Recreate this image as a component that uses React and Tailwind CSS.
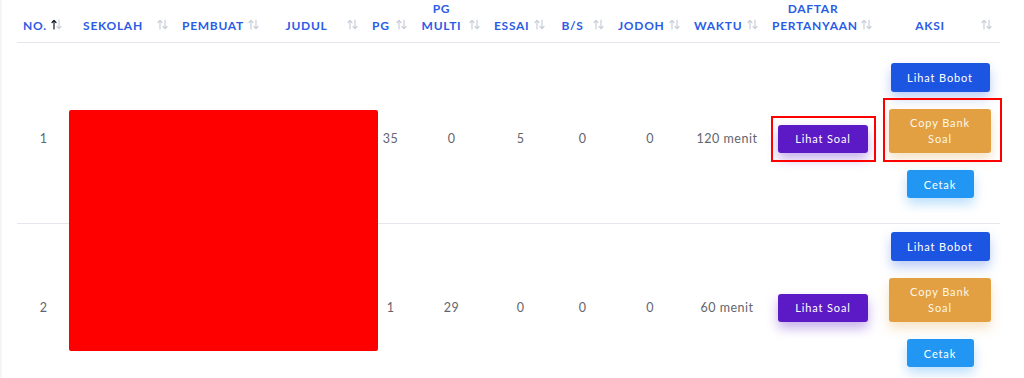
const columns = [
  { key: "no", label: ["NO."], width: 53, active: true },
  { key: "sekolah", label: ["SEKOLAH"], width: 106 },
  { key: "pembuat", label: ["PEMBUAT"], width: 91 },
  { key: "judul", label: ["JUDUL"], width: 99 },
  { key: "pg", label: ["PG"], width: 49 },
  { key: "pgmulti", label: ["PG", "MULTI"], width: 73 },
  { key: "essai", label: ["ESSAI"], width: 65 },
  { key: "bs", label: ["B/S"], width: 59 },
  { key: "jodoh", label: ["JODOH"], width: 76 },
  { key: "waktu", label: ["WAKTU"], width: 78 },
  { key: "daftar", label: ["DAFTAR", "PERTANYAAN"], width: 114 },
  { key: "aksi", label: ["AKSI"], width: 120 },
];

const rows = [
  { no: 1, pg: 35, pgmulti: 0, essai: 5, bs: 0, jodoh: 0, waktu: "120 menit", marked: true },
  { no: 2, pg: 1, pgmulti: 29, essai: 0, bs: 0, jodoh: 0, waktu: "60 menit", marked: false },
];

function SortIcon({ active }) {
  return (
    <svg width="11" height="11" viewBox="0 0 11 11" className="absolute right-[8px] bottom-[12px]">
      <g strokeWidth="1.2" fill="none" strokeLinecap="round" strokeLinejoin="round">
        <g stroke={active ? "#111827" : "#c9ced8"}>
          <path d="M3 10V1.5" />
          <path d="M1 3.5L3 1.5L5 3.5" />
        </g>
        <g stroke="#c9ced8">
          <path d="M8 1v8.5" />
          <path d="M6 7.5L8 9.5L10 7.5" />
        </g>
      </g>
    </svg>
  );
}

function Btn({ className, children }) {
  return (
    <button
      className={`block mx-auto mb-[17px] rounded-[3px] text-[11px] font-normal tracking-[0.08em] text-white leading-[15px] ${className}`}
    >
      {children}
    </button>
  );
}

function Cell({ first, children }) {
  return (
    <td
      className={`text-center align-middle text-[12.5px] text-[#63656d] tracking-[0.04em] px-[6px] pb-[8px] ${
        first ? "pt-[20px]" : "pt-[8px]"
      }`}
    >
      {children}
    </td>
  );
}

export default function App() {
  return (
    <div
      className="w-[1024px] h-[378px] overflow-hidden bg-white border-l-2 border-[#f4f5f8]"
      style={{ fontFamily: '"Lato", "Open Sans", sans-serif' }}
    >
      <div className="relative pl-[15px]">
        <table className="table-fixed border-collapse w-[983px]">
          <colgroup>
            {columns.map((c) => (
              <col key={c.key} style={{ width: c.width }} />
            ))}
          </colgroup>
          <thead>
            <tr className="h-[42px] border-b border-[#e4e7ee]">
              {columns.map((c) => (
                <th
                  key={c.key}
                  className="relative align-bottom text-center pl-[6px] pr-[26px] pb-[8px] pt-0 text-[12px] font-bold tracking-[0.06em] leading-[17px] text-[#2b5ce6]"
                >
                  {c.label.map((l) => (
                    <div key={l}>{l}</div>
                  ))}
                  <SortIcon active={c.active} />
                </th>
              ))}
            </tr>
          </thead>
          <tbody>
            {rows.map((r, i) => (
              <tr key={r.no} className={i === 0 ? "border-b border-[#e4e7ee]" : ""}>
                <Cell first={i === 0}>{r.no}</Cell>
                <Cell first={i === 0}></Cell>
                <Cell first={i === 0}></Cell>
                <Cell first={i === 0}></Cell>
                <Cell first={i === 0}>{r.pg}</Cell>
                <Cell first={i === 0}>{r.pgmulti}</Cell>
                <Cell first={i === 0}>{r.essai}</Cell>
                <Cell first={i === 0}>{r.bs}</Cell>
                <Cell first={i === 0}>{r.jodoh}</Cell>
                <Cell first={i === 0}>{r.waktu}</Cell>
                <Cell first={i === 0}>
                  <div className="relative w-[90px] mx-auto">
                    <button className="block w-[90px] h-[28px] rounded-[3px] bg-[#5c1ac6] text-white text-[11px] font-normal tracking-[0.08em] shadow-[0_6px_12px_rgba(92,26,198,0.35)]">
                      Lihat Soal
                    </button>
                    {r.marked && (
                      <span className="absolute left-[-7px] right-[-8px] top-[-9px] bottom-[-9px] border-2 border-[#ff0000]" />
                    )}
                  </div>
                </Cell>
                <Cell first={i === 0}>
                  <div className="flex flex-col items-center">
                    <Btn className="w-[99px] h-[29px] bg-[#1c55e2] shadow-[0_6px_12px_rgba(28,85,226,0.3)]">
                      Lihat Bobot
                    </Btn>
                    <div className="relative mb-[17px]">
                      <button className="block w-[102px] h-[44px] rounded-[3px] bg-[#e2a043] text-[#fff7e6] text-[11px] font-normal tracking-[0.08em] leading-[16px] px-[18px] shadow-[0_6px_12px_rgba(226,160,67,0.3)]">
                        Copy Bank Soal
                      </button>
                      {r.marked && (
                        <span className="absolute left-[-6px] right-[-11px] top-[-11px] bottom-[-9px] border-2 border-[#ff0000]" />
                      )}
                    </div>
                    <Btn className="w-[67px] h-[28px] bg-[#2196f3] shadow-[0_6px_12px_rgba(33,150,243,0.3)]">
                      Cetak
                    </Btn>
                  </div>
                </Cell>
              </tr>
            ))}
          </tbody>
        </table>
        <div className="absolute left-[67px] top-[110px] w-[309px] h-[241px] bg-[#ff0000] rounded-[2px]" />
      </div>
    </div>
  );
}
